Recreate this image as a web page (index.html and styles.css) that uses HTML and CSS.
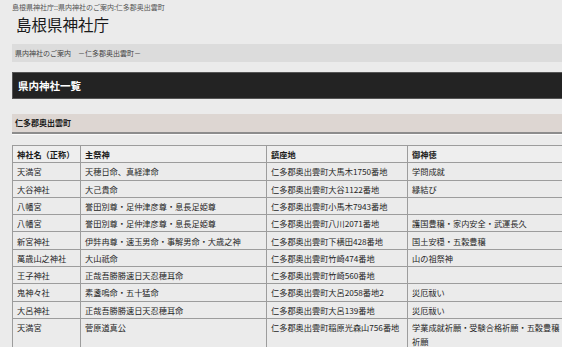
FILE: index.html
```html
<!DOCTYPE html>
<html lang="ja">
<head>
    <meta charset="UTF-8">
    <meta name="viewport" content="width=device-width, initial-scale=1.0">
    <title>島根県神社庁::県内神社のご案内:仁多郡奥出雲町</title>
    <link rel="stylesheet" href="styles.css">
</head>
<body>
    <div class="page">
        <div class="crumb">島根県神社庁::県内神社のご案内:仁多郡奥出雲町</div>
        <div class="site-title">島根県神社庁</div>
        <div class="path-bar">県内神社のご案内　－仁多郡奥出雲町－</div>
        <h1 class="page-title">県内神社一覧</h1>
        <h2 class="area-title">仁多郡奥出雲町</h2>

        <table class="shrine-table">
            <colgroup>
                <col class="c-name">
                <col class="c-god">
                <col class="c-addr">
                <col class="c-virtue">
            </colgroup>
            <thead>
                <tr>
                    <th>神社名（正称）</th>
                    <th>主祭神</th>
                    <th>鎮座地</th>
                    <th>御神徳</th>
                </tr>
            </thead>
            <tbody>
                <tr><td>天満宮</td><td>天穂日命、真経津命</td><td>仁多郡奥出雲町大馬木1750番地</td><td>学問成就</td></tr>
                <tr><td>大谷神社</td><td>大己貴命</td><td>仁多郡奥出雲町大谷1122番地</td><td>縁結び</td></tr>
                <tr><td>八幡宮</td><td>誉田別尊・足仲津彦尊・息長足姫尊</td><td>仁多郡奥出雲町小馬木7943番地</td><td></td></tr>
                <tr><td>八幡宮</td><td>誉田別尊・足仲津彦尊・息長足姫尊</td><td>仁多郡奥出雲町八川2071番地</td><td>護国豊穣・家内安全・武運長久</td></tr>
                <tr><td>新宮神社</td><td>伊弉冉尊・速玉男命・事解男命・大歳之神</td><td>仁多郡奥出雲町下横田428番地</td><td>国土安穏・五穀豊穣</td></tr>
                <tr><td>萬歳山之神社</td><td>大山祇命</td><td>仁多郡奥出雲町竹崎474番地</td><td>山の祖祭神</td></tr>
                <tr><td>王子神社</td><td>正哉吾勝勝速日天忍穂耳命</td><td>仁多郡奥出雲町竹崎560番地</td><td></td></tr>
                <tr><td>鬼神々社</td><td>素盞嗚命・五十猛命</td><td>仁多郡奥出雲町大呂2058番地2</td><td>災厄祓い</td></tr>
                <tr><td>大呂神社</td><td>正哉吾勝勝速日天忍穂耳命</td><td>仁多郡奥出雲町大呂139番地</td><td>災厄祓い</td></tr>
                <tr><td>天満宮</td><td>菅原道真公</td><td>仁多郡奥出雲町稲原光森山756番地</td><td>学業成就祈願・受験合格祈願・五穀豊穣祈願</td></tr>
            </tbody>
        </table>
    </div>
</body>
</html>
```

FILE: styles.css
```css
html {
    overflow: hidden;
}
body {
    font-family: "Noto Sans CJK JP", "Noto Sans", sans-serif;
    background-color: #ebebeb;
    color: #222;
    margin: 0;
    padding: 0;
}
.page {
    width: 556px;
    padding-left: 12px;
}
.crumb {
    font-size: 7px;
    line-height: 10px;
    color: #555;
    padding-top: 2px;
}
.site-title {
    font-size: 15.5px;
    line-height: 20px;
    color: #1a1a1a;
    padding: 2px 0 0 4px;
    height: 30px;
}
.path-bar {
    background-color: #dcdcdc;
    font-size: 7px;
    line-height: 18px;
    color: #444;
    padding-left: 3px;
}
.page-title {
    margin: 10px 0 0;
    background-color: #232323;
    border: 1px solid #555;
    color: #fff;
    font-size: 10.5px;
    line-height: 25px;
    padding-left: 5px;
}
.area-title {
    margin: 15px 0 0;
    background-color: #ddd6d2;
    border-bottom: 2px solid #8c8c8c;
    box-shadow: 0 1px 0 #fafafa;
    color: #1a1a1a;
    font-size: 8px;
    line-height: 18px;
    padding-left: 3px;
}
.shrine-table {
    margin-top: 11px;
    width: 100%;
    border-collapse: collapse;
    table-layout: fixed;
    border: 1px solid #9c9c9c;
    font-size: 8.2px;
}
.c-name { width: 68px; }
.c-god { width: 186px; }
.c-addr { width: 141px; }
.shrine-table th,
.shrine-table td {
    border: 1px solid #9c9c9c;
    text-align: left;
    vertical-align: top;
    line-height: 14px;
    padding: 1.2px 4px 1.1px;
    color: #262626;
}
.shrine-table th {
    background-color: #eeeeee;
    color: #1a1a1a;
}
```
